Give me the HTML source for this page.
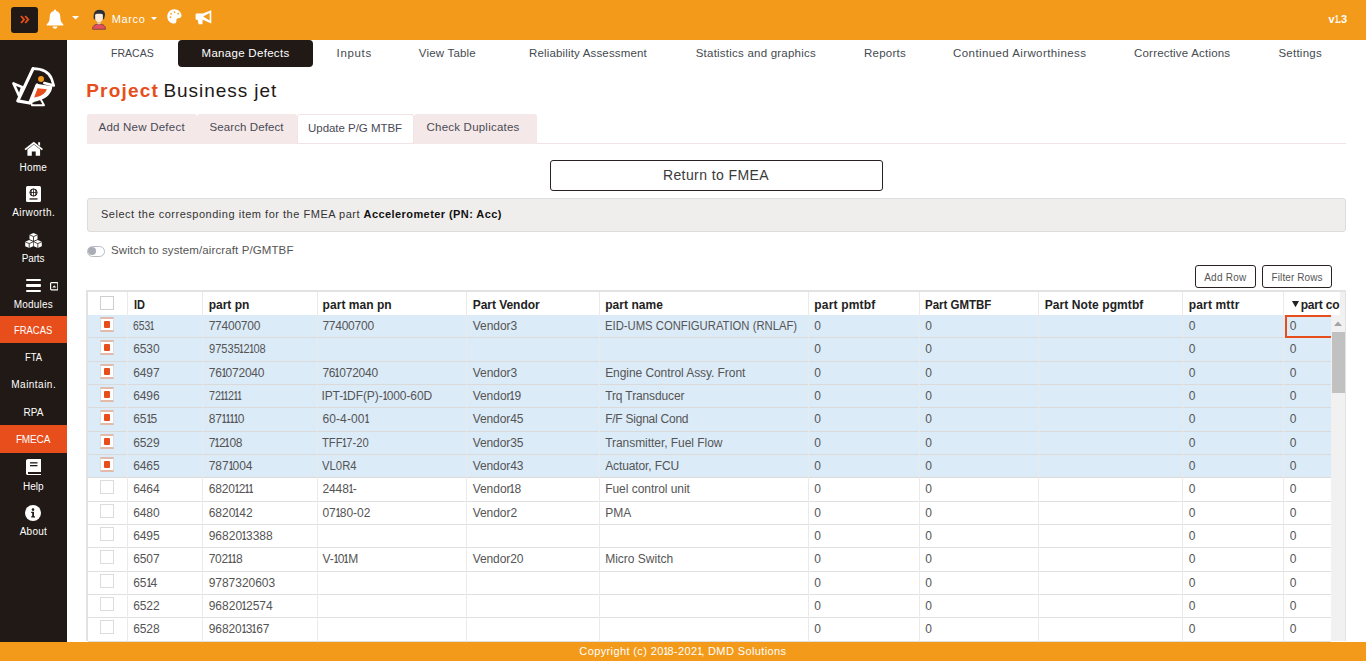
<!DOCTYPE html>
<html><head><meta charset="utf-8"><style>
html,body{margin:0;padding:0;width:1366px;height:661px;overflow:hidden;background:#fff;position:relative}
body{font-family:"Liberation Sans",sans-serif}
.t{position:absolute;white-space:nowrap}
.b{position:absolute}
</style></head><body>
<div class="b" style="left:0px;top:0px;width:1366px;height:40px;background:#F39A1B"></div>
<div class="b" style="left:11px;top:7px;width:27px;height:26px;background:#211915;border-radius:3px"></div>
<svg class="b" style="left:20px;top:14.5px" width="10" height="9" viewBox="0 0 10 9"><path d="M1 1 L4 4.5 L1 8 M5.2 1 L8.2 4.5 L5.2 8" stroke="#E84E1B" stroke-width="1.9" fill="none"/></svg>
<svg class="b" style="left:46px;top:9px" width="18" height="20" viewBox="0 0 18 20"><path d="M9 0.5 C10 0.5 10.2 1.4 10.2 2 C13 2.6 14.3 5 14.3 8 C14.3 12 15.3 13.6 17.3 15.3 L17.3 16.5 L0.7 16.5 L0.7 15.3 C2.7 13.6 3.7 12 3.7 8 C3.7 5 5 2.6 7.8 2 C7.8 1.4 8 0.5 9 0.5 Z M6.6 17.5 L11.4 17.5 C11.2 19 10.2 19.7 9 19.7 C7.8 19.7 6.8 19 6.6 17.5 Z" fill="#fff"/></svg>
<svg class="b" style="left:72px;top:16px" width="7" height="4" viewBox="0 0 7 4"><path d="M0 0 L7 0 L3.5 3.6 Z" fill="#fff"/></svg>
<svg class="b" style="left:88px;top:6px" width="24" height="26" viewBox="0 0 610 661"><path d="M118 592 C108 510 170 462 280 460 C390 462 452 510 442 592 Z" fill="#E94E5F" stroke="#2A2A33" stroke-width="14"/><rect x="235" y="380" width="88" height="85" fill="#E3C9A6"/><path d="M148 335 C125 200 170 95 290 95 C405 95 448 170 428 255 L405 335 Z" fill="#2B2F3A"/><path d="M182 232 C182 205 205 198 280 198 C355 198 378 205 378 232 L378 312 C378 372 338 405 280 405 C222 405 182 372 182 312 Z" fill="#FDEBD7"/></svg>
<div class="t" style="left:111.80px;top:13.66px;font-size:11px;line-height:11px;color:#fff;letter-spacing:0.625px;">Marco</div>
<svg class="b" style="left:151px;top:17px" width="6" height="4" viewBox="0 0 6 4"><path d="M0 0 L6 0 L3 3.2 Z" fill="#fff"/></svg>
<svg class="b" style="left:167px;top:9.3px" width="15" height="15" viewBox="0 0 15 15"><path d="M7.3 0.2 C11.5 0.2 14.5 3.2 14.5 6.6 C14.5 8.6 13.3 9.3 11.6 9.3 C10.3 9.3 9.4 9.8 9.4 11.2 C9.4 12.6 9.3 14.6 7.3 14.6 C3.2 14.6 0.3 11.3 0.3 7.4 C0.3 3.5 3.3 0.2 7.3 0.2 Z" fill="#fff"/><circle cx="4.1" cy="4.7" r="0.85" fill="#F39A1B"/><circle cx="7.5" cy="3.1" r="0.85" fill="#F39A1B"/><circle cx="11.2" cy="4.7" r="0.85" fill="#F39A1B"/><circle cx="3.5" cy="8.2" r="0.85" fill="#F39A1B"/></svg>
<svg class="b" style="left:194.5px;top:9.5px" width="17" height="15" viewBox="0 0 17 15"><path d="M1.3 3.5 L7.7 3.5 L16.3 0.2 L16.3 13.5 L7.7 9.7 L7.5 9.7 L7.5 14.2 L3.6 14.2 L2.6 9.7 L1.3 9.7 C0.8 9.7 0.6 9.3 0.6 8.8 L0.6 4.4 C0.6 3.9 0.8 3.5 1.3 3.5 Z" fill="#fff"/><path d="M8.2 6.6 L14.6 3.0 L14.6 10.4 Z" fill="#F39A1B"/></svg>
<div class="t" style="left:1328.60px;top:14.26px;font-size:11px;line-height:11px;color:#fff;font-weight:bold;letter-spacing:-0.200px;">v<span style="display:inline-block;width:3.63px;transform:scaleX(0.62);transform-origin:0 0;font-weight:bold">1</span>.3</div>
<div class="b" style="left:0px;top:40px;width:67px;height:621px;background:#211915"></div>
<svg class="b" style="left:8px;top:62px" width="52" height="48" viewBox="0 0 716 661"><path d="M392 300 L612 334 C600 440 525 505 445 522 L300 575 Z" fill="#fff"/><g fill="none" stroke="#fff" stroke-linejoin="round" stroke-linecap="round"><path d="M345 92 L135 535 L298 565 L400 318" stroke-width="44"/><path d="M345 92 C470 92 555 125 600 230 L630 324 L500 290" stroke-width="36"/><path d="M75 295 L196 346 L155 470 Z" stroke-width="36"/><path d="M310 540 L332 596 L496 596 L450 512" stroke-width="26"/></g><path d="M407 360 L535 376 C510 440 450 478 360 490 Z" fill="#E84E1B"/><path d="M360 548 L405 548 L382 585 Z" fill="#211915"/><circle cx="455" cy="235" r="41" fill="#F39A1B"/></svg>
<svg class="b" style="left:23.5px;top:140.5px" width="19.5" height="15" viewBox="0 0 20 15"><path d="M10 0.5 L19.5 8 L18.3 9.3 L10 2.8 L1.7 9.3 L0.5 8 Z M14.5 1 L16.5 1 L16.5 5 L14.5 3.5 Z M3.5 8.5 L10 3.5 L16.5 8.5 L16.5 15 L12 15 L12 10.5 L8 10.5 L8 15 L3.5 15 Z" fill="#fff"/></svg>
<div class="t" style="left:19.60px;top:162.91px;font-size:10px;line-height:10px;color:#fff;letter-spacing:0.200px;">Home</div>
<svg class="b" style="left:25.8px;top:186px" width="15" height="16" viewBox="0 0 15 16"><rect x="0" y="0" width="15" height="16" rx="1.5" fill="#fff"/><circle cx="7.5" cy="6.5" r="3.6" fill="none" stroke="#211915" stroke-width="1"/><path d="M3.9 6.5 L11.1 6.5 M7.5 2.9 L7.5 10.1 M5.8 3.2 C5 5.5 5 7.5 5.8 9.8 M9.2 3.2 C10 5.5 10 7.5 9.2 9.8" stroke="#211915" stroke-width="0.8" fill="none"/><rect x="3.5" y="12.3" width="8" height="1.3" fill="#211915"/></svg>
<div class="t" style="left:12.30px;top:207.72px;font-size:10px;line-height:10px;color:#fff;letter-spacing:0.363px;">Airworth.</div>
<svg class="b" style="left:25px;top:232.5px" width="17" height="15" viewBox="0 0 17 15"><path d="M8.5 0 L12.5 1.8 L12.5 6.2 L8.5 8 L4.5 6.2 L4.5 1.8 Z M4.2 7 L8.2 8.8 L8.2 13.2 L4.2 15 L0.2 13.2 L0.2 8.8 Z M12.8 7 L16.8 8.8 L16.8 13.2 L12.8 15 L8.8 13.2 L8.8 8.8 Z" fill="#fff"/><path d="M4.5 1.8 L8.5 3.6 L12.5 1.8 M8.5 3.6 L8.5 8 M0.2 8.8 L4.2 10.6 L8.2 8.8 M4.2 10.6 L4.2 15 M8.8 8.8 L12.8 10.6 L16.8 8.8 M12.8 10.6 L12.8 15" stroke="#211915" stroke-width="0.8" fill="none"/></svg>
<div class="t" style="left:21.80px;top:253.72px;font-size:10px;line-height:10px;color:#fff;letter-spacing:-0.175px;">Parts</div>
<div class="b" style="left:25.8px;top:278.5px;width:15px;height:2.6px;background:#fff;border-radius:1px"></div>
<div class="b" style="left:25.8px;top:284px;width:15px;height:2.6px;background:#fff;border-radius:1px"></div>
<div class="b" style="left:25.8px;top:289.5px;width:15px;height:2.6px;background:#fff;border-radius:1px"></div>
<svg class="b" style="left:49.8px;top:282px" width="8.5" height="8.5" viewBox="0 0 8.5 8.5"><rect x="0.6" y="0.6" width="7.3" height="7.3" rx="1" fill="none" stroke="#fff" stroke-width="1.2"/><path d="M2.3 5.6 L4.25 3.2 L6.2 5.6 Z" fill="#fff"/></svg>
<div class="t" style="left:13.80px;top:299.92px;font-size:10px;line-height:10px;color:#fff;letter-spacing:0.200px;">Modules</div>
<div class="b" style="left:0px;top:316px;width:67px;height:27px;background:#E84E1B"></div>
<div class="t" style="left:14.00px;top:325.81px;font-size:10px;line-height:10px;color:#fff;transform:scaleX(0.9415);transform-origin:0 0;">FRACAS</div>
<div class="t" style="left:24.50px;top:352.92px;font-size:10px;line-height:10px;color:#fff;transform:scaleX(0.9421);transform-origin:0 0;">FTA</div>
<div class="t" style="left:11.30px;top:379.62px;font-size:10px;line-height:10px;color:#fff;letter-spacing:0.475px;">Maintain.</div>
<div class="t" style="left:23.40px;top:407.52px;font-size:10px;line-height:10px;color:#fff;letter-spacing:0.100px;">RPA</div>
<div class="b" style="left:0px;top:424.6px;width:67px;height:28px;background:#E84E1B"></div>
<div class="t" style="left:15.90px;top:434.72px;font-size:10px;line-height:10px;color:#fff;letter-spacing:-0.125px;">FMECA</div>
<svg class="b" style="left:26px;top:458.8px" width="15" height="16.2" viewBox="0 0 15 16.2"><path d="M2 0 L15 0 L15 13 L14 13 L14 15 L15 15 L15 16.2 L2 16.2 C0.9 16.2 0 15.3 0 14.2 L0 2 C0 0.9 0.9 0 2 0 Z" fill="#fff"/><rect x="4" y="3.2" width="7.5" height="1.3" fill="#211915"/><rect x="4" y="6" width="7.5" height="1.3" fill="#211915"/><rect x="2" y="13" width="12" height="2" fill="#211915"/></svg>
<div class="t" style="left:23.00px;top:482.12px;font-size:10px;line-height:10px;color:#fff;letter-spacing:-0.033px;">Help</div>
<svg class="b" style="left:25px;top:505.2px" width="16" height="16" viewBox="0 0 16 16"><circle cx="8" cy="8" r="8" fill="#fff"/><circle cx="8" cy="4.6" r="1.3" fill="#211915"/><path d="M6.2 6.8 L9 6.8 L9 11.2 L10 11.2 L10 12.4 L6.2 12.4 L6.2 11.2 L7.2 11.2 L7.2 8 L6.2 8 Z" fill="#211915"/></svg>
<div class="t" style="left:19.70px;top:526.91px;font-size:10px;line-height:10px;color:#fff;letter-spacing:0.250px;">About</div>
<div class="b" style="left:178px;top:40px;width:135px;height:27px;background:#211915;border-radius:4px"></div>
<div class="t" style="left:111.00px;top:47.68px;font-size:11.5px;line-height:11.5px;color:#454a50;transform:scaleX(0.9149);transform-origin:0 0;">FRACAS</div>
<div class="t" style="left:336.60px;top:47.68px;font-size:11.5px;line-height:11.5px;color:#454a50;letter-spacing:0.660px;">Inputs</div>
<div class="t" style="left:418.80px;top:47.68px;font-size:11.5px;line-height:11.5px;color:#454a50;letter-spacing:0.189px;">View Table</div>
<div class="t" style="left:529.00px;top:47.68px;font-size:11.5px;line-height:11.5px;color:#454a50;letter-spacing:0.162px;">Reliability Assessment</div>
<div class="t" style="left:695.70px;top:47.68px;font-size:11.5px;line-height:11.5px;color:#454a50;letter-spacing:0.227px;">Statistics and graphics</div>
<div class="t" style="left:864.00px;top:47.68px;font-size:11.5px;line-height:11.5px;color:#454a50;letter-spacing:0.250px;">Reports</div>
<div class="t" style="left:953.10px;top:47.68px;font-size:11.5px;line-height:11.5px;color:#454a50;letter-spacing:0.405px;">Continued Airworthiness</div>
<div class="t" style="left:1134.00px;top:47.68px;font-size:11.5px;line-height:11.5px;color:#454a50;letter-spacing:0.200px;">Corrective Actions</div>
<div class="t" style="left:1278.40px;top:47.68px;font-size:11.5px;line-height:11.5px;color:#454a50;letter-spacing:0.257px;">Settings</div>
<div class="t" style="left:201.50px;top:47.68px;font-size:11.5px;line-height:11.5px;color:#fff;letter-spacing:0.300px;">Manage Defects</div>
<div class="t" style="left:86.20px;top:80.69px;font-size:19px;line-height:19px;color:#E84E1B;font-weight:bold;letter-spacing:1.200px;">Project</div>
<div class="t" style="left:163.50px;top:80.69px;font-size:19px;line-height:19px;color:#231815;letter-spacing:0.936px;">Business jet</div>
<div class="b" style="left:87px;top:143px;width:1259px;height:1px;background:#F2E4E4"></div>
<div class="b" style="left:87px;top:114px;width:110px;height:30px;background:#F4E8E8;border-radius:3px 3px 0 0"></div>
<div class="b" style="left:197px;top:114px;width:99.5px;height:30px;background:#F4E8E8;border-radius:3px 3px 0 0"></div>
<div class="b" style="left:296.8px;top:114px;width:117.4px;height:28.5px;background:#fff;border:1px solid #F2E4E4;border-bottom:none;box-sizing:border-box;border-radius:3px 3px 0 0"></div>
<div class="b" style="left:414px;top:114px;width:122.6px;height:29.5px;background:#F4E8E8;border-radius:3px 3px 0 0"></div>
<div class="t" style="left:98.50px;top:122.18px;font-size:11.5px;line-height:11.5px;color:#4a4a55;letter-spacing:0.231px;">Add New Defect</div>
<div class="t" style="left:209.60px;top:122.18px;font-size:11.5px;line-height:11.5px;color:#4a4a55;letter-spacing:0.092px;">Search Defect</div>
<div class="t" style="left:308.00px;top:122.78px;font-size:11.5px;line-height:11.5px;color:#4a4a55;letter-spacing:-0.036px;">Update P/G MTBF</div>
<div class="t" style="left:426.50px;top:121.78px;font-size:11.5px;line-height:11.5px;color:#4a4a55;letter-spacing:0.220px;">Check Duplicates</div>
<div class="b" style="left:550px;top:160px;width:333px;height:31px;border:1px solid #2a2220;border-radius:3px;box-sizing:border-box;background:#fff"></div>
<div class="t" style="left:662.90px;top:168.08px;font-size:14px;line-height:14px;color:#3a3a3a;letter-spacing:0.415px;">Return to FMEA</div>
<div class="b" style="left:87px;top:198px;width:1259px;height:33.5px;background:#EFEEED;border:1px solid #DCDCDC;border-radius:3px;box-sizing:border-box"></div>
<div class="t" style="left:101.00px;top:209.26px;font-size:11px;line-height:11px;color:#333;letter-spacing:0.517px;">Select the corresponding item for the FMEA part</div>
<div class="t" style="left:363.60px;top:209.26px;font-size:11px;line-height:11px;color:#111;font-weight:bold;letter-spacing:0.418px;">Accelerometer (PN: Acc)</div>
<div class="b" style="left:87px;top:246px;width:17.6px;height:10.5px;border:1px solid #b8bcc4;border-radius:6px;box-sizing:border-box;background:#fff"></div>
<div class="b" style="left:88.2px;top:247.2px;width:8.1px;height:8.1px;background:#A9ADB5;border-radius:50%"></div>
<div class="t" style="left:111.00px;top:245.18px;font-size:11.5px;line-height:11.5px;color:#555;letter-spacing:0.109px;">Switch to system/aircraft P/GMTBF</div>
<div class="b" style="left:1195px;top:265px;width:61px;height:23px;border:1px solid #2a2220;border-radius:3px;box-sizing:border-box"></div>
<div class="b" style="left:1262px;top:265px;width:70px;height:23px;border:1px solid #2a2220;border-radius:3px;box-sizing:border-box"></div>
<div class="t" style="left:1204.20px;top:272.81px;font-size:10px;line-height:10px;color:#555;letter-spacing:0.250px;">Add Row</div>
<div class="t" style="left:1271.50px;top:272.81px;font-size:10px;line-height:10px;color:#555;letter-spacing:0.110px;">Filter Rows</div>
<div class="b" style="left:86px;top:290px;width:1260px;height:351px;border:2px solid #E2E2E2;border-bottom:none;box-sizing:border-box"></div>
<div class="b" style="left:88px;top:315px;width:1242.5px;height:23px;background:#DCEBF8"></div>
<div class="b" style="left:88px;top:337px;width:1242.5px;height:1px;background:#DCDAD9"></div>
<div class="b" style="left:88px;top:338px;width:1242.5px;height:24px;background:#DCEBF8"></div>
<div class="b" style="left:88px;top:361px;width:1242.5px;height:1px;background:#DCDAD9"></div>
<div class="b" style="left:88px;top:362px;width:1242.5px;height:23px;background:#DCEBF8"></div>
<div class="b" style="left:88px;top:384px;width:1242.5px;height:1px;background:#DCDAD9"></div>
<div class="b" style="left:88px;top:385px;width:1242.5px;height:23px;background:#DCEBF8"></div>
<div class="b" style="left:88px;top:407px;width:1242.5px;height:1px;background:#DCDAD9"></div>
<div class="b" style="left:88px;top:408px;width:1242.5px;height:24px;background:#DCEBF8"></div>
<div class="b" style="left:88px;top:431px;width:1242.5px;height:1px;background:#DCDAD9"></div>
<div class="b" style="left:88px;top:432px;width:1242.5px;height:23px;background:#DCEBF8"></div>
<div class="b" style="left:88px;top:454px;width:1242.5px;height:1px;background:#DCDAD9"></div>
<div class="b" style="left:88px;top:455px;width:1242.5px;height:23px;background:#DCEBF8"></div>
<div class="b" style="left:88px;top:477px;width:1242.5px;height:1px;background:#DCDAD9"></div>
<div class="b" style="left:88px;top:501px;width:1242.5px;height:1px;background:#E0E0E0"></div>
<div class="b" style="left:88px;top:524px;width:1242.5px;height:1px;background:#E0E0E0"></div>
<div class="b" style="left:88px;top:547px;width:1242.5px;height:1px;background:#E0E0E0"></div>
<div class="b" style="left:88px;top:571px;width:1242.5px;height:1px;background:#E0E0E0"></div>
<div class="b" style="left:88px;top:594px;width:1242.5px;height:1px;background:#E0E0E0"></div>
<div class="b" style="left:88px;top:617px;width:1242.5px;height:1px;background:#E0E0E0"></div>
<div class="b" style="left:88px;top:641px;width:1242.5px;height:1px;background:#E0E0E0"></div>
<div class="b" style="left:1340px;top:291.5px;width:5px;height:23.5px;background:#F0F0F0"></div>
<div class="b" style="left:127px;top:291.5px;width:1px;height:350px;background:#EAEAEA"></div>
<div class="b" style="left:202px;top:291.5px;width:1px;height:350px;background:#EAEAEA"></div>
<div class="b" style="left:317px;top:291.5px;width:1px;height:350px;background:#EAEAEA"></div>
<div class="b" style="left:466px;top:291.5px;width:1px;height:350px;background:#EAEAEA"></div>
<div class="b" style="left:599px;top:291.5px;width:1px;height:350px;background:#EAEAEA"></div>
<div class="b" style="left:808px;top:291.5px;width:1px;height:350px;background:#EAEAEA"></div>
<div class="b" style="left:919px;top:291.5px;width:1px;height:350px;background:#EAEAEA"></div>
<div class="b" style="left:1038px;top:291.5px;width:1px;height:350px;background:#EAEAEA"></div>
<div class="b" style="left:1182px;top:291.5px;width:1px;height:350px;background:#EAEAEA"></div>
<div class="b" style="left:1283px;top:291.5px;width:1px;height:350px;background:#EAEAEA"></div>
<div class="b" style="left:100px;top:296px;width:14px;height:14px;border:1px solid #CFCFCF;box-sizing:border-box;background:#fff"></div>
<div class="t" style="left:133.50px;top:299.00px;font-size:12px;line-height:12px;color:#222;font-weight:bold;transform:scaleX(0.9167);transform-origin:0 0;">ID</div>
<div class="t" style="left:208.70px;top:299.00px;font-size:12px;line-height:12px;color:#222;font-weight:bold;">part pn</div>
<div class="t" style="left:322.60px;top:299.00px;font-size:12px;line-height:12px;color:#222;font-weight:bold;letter-spacing:0.040px;">part man pn</div>
<div class="t" style="left:472.70px;top:299.00px;font-size:12px;line-height:12px;color:#222;font-weight:bold;letter-spacing:-0.040px;">Part Vendor</div>
<div class="t" style="left:605.20px;top:299.00px;font-size:12px;line-height:12px;color:#222;font-weight:bold;letter-spacing:0.037px;">part name</div>
<div class="t" style="left:814.30px;top:299.00px;font-size:12px;line-height:12px;color:#222;font-weight:bold;letter-spacing:0.178px;">part pmtbf</div>
<div class="t" style="left:925.20px;top:299.00px;font-size:12px;line-height:12px;color:#222;font-weight:bold;transform:scaleX(0.9571);transform-origin:0 0;">Part GMTBF</div>
<div class="t" style="left:1044.70px;top:299.00px;font-size:12px;line-height:12px;color:#222;font-weight:bold;letter-spacing:0.087px;">Part Note pgmtbf</div>
<div class="t" style="left:1188.80px;top:299.00px;font-size:12px;line-height:12px;color:#222;font-weight:bold;letter-spacing:0.150px;">part mttr</div>
<svg class="b" style="left:1291.7px;top:301.3px" width="7" height="6.3" viewBox="0 0 7 6.3"><path d="M0 0 L7 0 L3.5 6.3 Z" fill="#222"/></svg>
<div class="t" style="left:1300.70px;top:299.00px;font-size:12px;line-height:12px;color:#222;font-weight:bold;letter-spacing:-0.183px;">part co</div>
<div class="t" style="left:133.20px;top:319.90px;font-size:12px;line-height:12px;color:#555555;transform:scaleX(0.8680);transform-origin:0 0;">653<span style="display:inline-block;width:3.96px;transform:scaleX(0.62);transform-origin:0 0;font-weight:bold">1</span></div>
<div class="t" style="left:208.70px;top:319.90px;font-size:12px;line-height:12px;color:#555555;letter-spacing:-0.243px;">77400700</div>
<div class="t" style="left:322.40px;top:319.90px;font-size:12px;line-height:12px;color:#555555;letter-spacing:-0.243px;">77400700</div>
<div class="t" style="left:472.70px;top:319.90px;font-size:12px;line-height:12px;color:#555555;letter-spacing:-0.033px;">Vendor3</div>
<div class="t" style="left:605.20px;top:319.90px;font-size:12px;line-height:12px;color:#555555;transform:scaleX(0.9397);transform-origin:0 0;">EID-UMS CONFIGURATION (RNLAF)</div>
<div class="t" style="left:814.30px;top:319.90px;font-size:12px;line-height:12px;color:#555555;">0</div>
<div class="t" style="left:925.20px;top:319.90px;font-size:12px;line-height:12px;color:#555555;">0</div>
<div class="t" style="left:1188.80px;top:319.90px;font-size:12px;line-height:12px;color:#555555;">0</div>
<div class="t" style="left:1289.80px;top:319.90px;font-size:12px;line-height:12px;color:#555555;">0</div>
<div class="b" style="left:100px;top:317.00px;width:14px;height:15px;background:#fff;border-left:1px solid #DDD;border-right:1px solid #DDD;border-top:2px solid #E3B9A9;border-bottom:2px solid #E3B9A9;box-sizing:border-box"></div>
<div class="b" style="left:103.7px;top:320.80px;width:6.8px;height:6.8px;background:#E84E1B;border-radius:1px"></div>
<div class="t" style="left:133.20px;top:342.90px;font-size:12px;line-height:12px;color:#555555;letter-spacing:-0.100px;">6530</div>
<div class="t" style="left:208.70px;top:342.90px;font-size:12px;line-height:12px;color:#555555;transform:scaleX(0.9258);transform-origin:0 0;">97535<span style="display:inline-block;width:3.96px;transform:scaleX(0.62);transform-origin:0 0;font-weight:bold">1</span>2<span style="display:inline-block;width:3.96px;transform:scaleX(0.62);transform-origin:0 0;font-weight:bold">1</span>08</div>
<div class="t" style="left:814.30px;top:342.90px;font-size:12px;line-height:12px;color:#555555;">0</div>
<div class="t" style="left:925.20px;top:342.90px;font-size:12px;line-height:12px;color:#555555;">0</div>
<div class="t" style="left:1188.80px;top:342.90px;font-size:12px;line-height:12px;color:#555555;">0</div>
<div class="t" style="left:1289.80px;top:342.90px;font-size:12px;line-height:12px;color:#555555;">0</div>
<div class="b" style="left:100px;top:340.00px;width:14px;height:15px;background:#fff;border-left:1px solid #DDD;border-right:1px solid #DDD;border-top:2px solid #E3B9A9;border-bottom:2px solid #E3B9A9;box-sizing:border-box"></div>
<div class="b" style="left:103.7px;top:343.80px;width:6.8px;height:6.8px;background:#E84E1B;border-radius:1px"></div>
<div class="t" style="left:133.20px;top:366.90px;font-size:12px;line-height:12px;color:#555555;letter-spacing:-0.100px;">6497</div>
<div class="t" style="left:208.70px;top:366.90px;font-size:12px;line-height:12px;color:#555555;letter-spacing:-0.225px;">76<span style="display:inline-block;width:3.96px;transform:scaleX(0.62);transform-origin:0 0;font-weight:bold">1</span>072040</div>
<div class="t" style="left:322.40px;top:366.90px;font-size:12px;line-height:12px;color:#555555;letter-spacing:-0.225px;">76<span style="display:inline-block;width:3.96px;transform:scaleX(0.62);transform-origin:0 0;font-weight:bold">1</span>072040</div>
<div class="t" style="left:472.70px;top:366.90px;font-size:12px;line-height:12px;color:#555555;letter-spacing:-0.033px;">Vendor3</div>
<div class="t" style="left:605.20px;top:366.90px;font-size:12px;line-height:12px;color:#555555;letter-spacing:-0.068px;">Engine Control Assy. Front</div>
<div class="t" style="left:814.30px;top:366.90px;font-size:12px;line-height:12px;color:#555555;">0</div>
<div class="t" style="left:925.20px;top:366.90px;font-size:12px;line-height:12px;color:#555555;">0</div>
<div class="t" style="left:1188.80px;top:366.90px;font-size:12px;line-height:12px;color:#555555;">0</div>
<div class="t" style="left:1289.80px;top:366.90px;font-size:12px;line-height:12px;color:#555555;">0</div>
<div class="b" style="left:100px;top:364.00px;width:14px;height:15px;background:#fff;border-left:1px solid #DDD;border-right:1px solid #DDD;border-top:2px solid #E3B9A9;border-bottom:2px solid #E3B9A9;box-sizing:border-box"></div>
<div class="b" style="left:103.7px;top:367.80px;width:6.8px;height:6.8px;background:#E84E1B;border-radius:1px"></div>
<div class="t" style="left:133.20px;top:389.90px;font-size:12px;line-height:12px;color:#555555;letter-spacing:-0.100px;">6496</div>
<div class="t" style="left:208.70px;top:389.90px;font-size:12px;line-height:12px;color:#555555;transform:scaleX(0.8973);transform-origin:0 0;">72<span style="display:inline-block;width:3.96px;transform:scaleX(0.62);transform-origin:0 0;font-weight:bold">1</span><span style="display:inline-block;width:3.96px;transform:scaleX(0.62);transform-origin:0 0;font-weight:bold">1</span>2<span style="display:inline-block;width:3.96px;transform:scaleX(0.62);transform-origin:0 0;font-weight:bold">1</span><span style="display:inline-block;width:3.96px;transform:scaleX(0.62);transform-origin:0 0;font-weight:bold">1</span></div>
<div class="t" style="left:321.40px;top:389.90px;font-size:12px;line-height:12px;color:#555555;letter-spacing:-0.067px;">IPT-<span style="display:inline-block;width:3.96px;transform:scaleX(0.62);transform-origin:0 0;font-weight:bold">1</span>DF(P)-<span style="display:inline-block;width:3.96px;transform:scaleX(0.62);transform-origin:0 0;font-weight:bold">1</span>000-60D</div>
<div class="t" style="left:472.70px;top:389.90px;font-size:12px;line-height:12px;color:#555555;letter-spacing:-0.043px;">Vendor<span style="display:inline-block;width:3.96px;transform:scaleX(0.62);transform-origin:0 0;font-weight:bold">1</span>9</div>
<div class="t" style="left:605.20px;top:389.90px;font-size:12px;line-height:12px;color:#555555;letter-spacing:-0.123px;">Trq Transducer</div>
<div class="t" style="left:814.30px;top:389.90px;font-size:12px;line-height:12px;color:#555555;">0</div>
<div class="t" style="left:925.20px;top:389.90px;font-size:12px;line-height:12px;color:#555555;">0</div>
<div class="t" style="left:1188.80px;top:389.90px;font-size:12px;line-height:12px;color:#555555;">0</div>
<div class="t" style="left:1289.80px;top:389.90px;font-size:12px;line-height:12px;color:#555555;">0</div>
<div class="b" style="left:100px;top:387.00px;width:14px;height:15px;background:#fff;border-left:1px solid #DDD;border-right:1px solid #DDD;border-top:2px solid #E3B9A9;border-bottom:2px solid #E3B9A9;box-sizing:border-box"></div>
<div class="b" style="left:103.7px;top:390.80px;width:6.8px;height:6.8px;background:#E84E1B;border-radius:1px"></div>
<div class="t" style="left:133.20px;top:412.90px;font-size:12px;line-height:12px;color:#555555;">65<span style="display:inline-block;width:3.96px;transform:scaleX(0.62);transform-origin:0 0;font-weight:bold">1</span>5</div>
<div class="t" style="left:208.70px;top:412.90px;font-size:12px;line-height:12px;color:#555555;letter-spacing:-0.083px;">87<span style="display:inline-block;width:3.96px;transform:scaleX(0.62);transform-origin:0 0;font-weight:bold">1</span><span style="display:inline-block;width:3.96px;transform:scaleX(0.62);transform-origin:0 0;font-weight:bold">1</span><span style="display:inline-block;width:3.96px;transform:scaleX(0.62);transform-origin:0 0;font-weight:bold">1</span><span style="display:inline-block;width:3.96px;transform:scaleX(0.62);transform-origin:0 0;font-weight:bold">1</span>0</div>
<div class="t" style="left:322.40px;top:412.90px;font-size:12px;line-height:12px;color:#555555;letter-spacing:0.129px;">60-4-00<span style="display:inline-block;width:3.96px;transform:scaleX(0.62);transform-origin:0 0;font-weight:bold">1</span></div>
<div class="t" style="left:472.70px;top:412.90px;font-size:12px;line-height:12px;color:#555555;letter-spacing:-0.086px;">Vendor45</div>
<div class="t" style="left:605.20px;top:412.90px;font-size:12px;line-height:12px;color:#555555;letter-spacing:-0.243px;">F/F Signal Cond</div>
<div class="t" style="left:814.30px;top:412.90px;font-size:12px;line-height:12px;color:#555555;">0</div>
<div class="t" style="left:925.20px;top:412.90px;font-size:12px;line-height:12px;color:#555555;">0</div>
<div class="t" style="left:1188.80px;top:412.90px;font-size:12px;line-height:12px;color:#555555;">0</div>
<div class="t" style="left:1289.80px;top:412.90px;font-size:12px;line-height:12px;color:#555555;">0</div>
<div class="b" style="left:100px;top:410.00px;width:14px;height:15px;background:#fff;border-left:1px solid #DDD;border-right:1px solid #DDD;border-top:2px solid #E3B9A9;border-bottom:2px solid #E3B9A9;box-sizing:border-box"></div>
<div class="b" style="left:103.7px;top:413.80px;width:6.8px;height:6.8px;background:#E84E1B;border-radius:1px"></div>
<div class="t" style="left:133.20px;top:436.90px;font-size:12px;line-height:12px;color:#555555;letter-spacing:-0.100px;">6529</div>
<div class="t" style="left:208.70px;top:436.90px;font-size:12px;line-height:12px;color:#555555;letter-spacing:-0.260px;">7<span style="display:inline-block;width:3.96px;transform:scaleX(0.62);transform-origin:0 0;font-weight:bold">1</span>2<span style="display:inline-block;width:3.96px;transform:scaleX(0.62);transform-origin:0 0;font-weight:bold">1</span>08</div>
<div class="t" style="left:322.40px;top:436.90px;font-size:12px;line-height:12px;color:#555555;transform:scaleX(0.9340);transform-origin:0 0;">TFF<span style="display:inline-block;width:3.96px;transform:scaleX(0.62);transform-origin:0 0;font-weight:bold">1</span>7-20</div>
<div class="t" style="left:472.70px;top:436.90px;font-size:12px;line-height:12px;color:#555555;letter-spacing:-0.086px;">Vendor35</div>
<div class="t" style="left:605.20px;top:436.90px;font-size:12px;line-height:12px;color:#555555;letter-spacing:-0.048px;">Transmitter, Fuel Flow</div>
<div class="t" style="left:814.30px;top:436.90px;font-size:12px;line-height:12px;color:#555555;">0</div>
<div class="t" style="left:925.20px;top:436.90px;font-size:12px;line-height:12px;color:#555555;">0</div>
<div class="t" style="left:1188.80px;top:436.90px;font-size:12px;line-height:12px;color:#555555;">0</div>
<div class="t" style="left:1289.80px;top:436.90px;font-size:12px;line-height:12px;color:#555555;">0</div>
<div class="b" style="left:100px;top:434.00px;width:14px;height:15px;background:#fff;border-left:1px solid #DDD;border-right:1px solid #DDD;border-top:2px solid #E3B9A9;border-bottom:2px solid #E3B9A9;box-sizing:border-box"></div>
<div class="b" style="left:103.7px;top:437.80px;width:6.8px;height:6.8px;background:#E84E1B;border-radius:1px"></div>
<div class="t" style="left:133.20px;top:459.90px;font-size:12px;line-height:12px;color:#555555;letter-spacing:-0.100px;">6465</div>
<div class="t" style="left:208.70px;top:459.90px;font-size:12px;line-height:12px;color:#555555;letter-spacing:-0.050px;">787<span style="display:inline-block;width:3.96px;transform:scaleX(0.62);transform-origin:0 0;font-weight:bold">1</span>004</div>
<div class="t" style="left:322.40px;top:459.90px;font-size:12px;line-height:12px;color:#555555;transform:scaleX(0.9432);transform-origin:0 0;">VL0R4</div>
<div class="t" style="left:472.70px;top:459.90px;font-size:12px;line-height:12px;color:#555555;letter-spacing:-0.086px;">Vendor43</div>
<div class="t" style="left:605.20px;top:459.90px;font-size:12px;line-height:12px;color:#555555;letter-spacing:-0.117px;">Actuator, FCU</div>
<div class="t" style="left:814.30px;top:459.90px;font-size:12px;line-height:12px;color:#555555;">0</div>
<div class="t" style="left:925.20px;top:459.90px;font-size:12px;line-height:12px;color:#555555;">0</div>
<div class="t" style="left:1188.80px;top:459.90px;font-size:12px;line-height:12px;color:#555555;">0</div>
<div class="t" style="left:1289.80px;top:459.90px;font-size:12px;line-height:12px;color:#555555;">0</div>
<div class="b" style="left:100px;top:457.00px;width:14px;height:15px;background:#fff;border-left:1px solid #DDD;border-right:1px solid #DDD;border-top:2px solid #E3B9A9;border-bottom:2px solid #E3B9A9;box-sizing:border-box"></div>
<div class="b" style="left:103.7px;top:460.80px;width:6.8px;height:6.8px;background:#E84E1B;border-radius:1px"></div>
<div class="t" style="left:133.20px;top:482.90px;font-size:12px;line-height:12px;color:#555555;letter-spacing:-0.100px;">6464</div>
<div class="t" style="left:208.70px;top:482.90px;font-size:12px;line-height:12px;color:#555555;letter-spacing:-0.129px;">6820<span style="display:inline-block;width:3.96px;transform:scaleX(0.62);transform-origin:0 0;font-weight:bold">1</span>2<span style="display:inline-block;width:3.96px;transform:scaleX(0.62);transform-origin:0 0;font-weight:bold">1</span><span style="display:inline-block;width:3.96px;transform:scaleX(0.62);transform-origin:0 0;font-weight:bold">1</span></div>
<div class="t" style="left:322.40px;top:482.90px;font-size:12px;line-height:12px;color:#555555;letter-spacing:-0.070px;">2448<span style="display:inline-block;width:3.96px;transform:scaleX(0.62);transform-origin:0 0;font-weight:bold">1</span>-</div>
<div class="t" style="left:472.70px;top:482.90px;font-size:12px;line-height:12px;color:#555555;letter-spacing:-0.043px;">Vendor<span style="display:inline-block;width:3.96px;transform:scaleX(0.62);transform-origin:0 0;font-weight:bold">1</span>8</div>
<div class="t" style="left:605.20px;top:482.90px;font-size:12px;line-height:12px;color:#555555;letter-spacing:-0.038px;">Fuel control unit</div>
<div class="t" style="left:814.30px;top:482.90px;font-size:12px;line-height:12px;color:#555555;">0</div>
<div class="t" style="left:925.20px;top:482.90px;font-size:12px;line-height:12px;color:#555555;">0</div>
<div class="t" style="left:1188.80px;top:482.90px;font-size:12px;line-height:12px;color:#555555;">0</div>
<div class="t" style="left:1289.80px;top:482.90px;font-size:12px;line-height:12px;color:#555555;">0</div>
<div class="b" style="left:100px;top:480.20px;width:14px;height:14px;background:#fff;border:1px solid #DCDCDC;box-sizing:border-box"></div>
<div class="t" style="left:133.20px;top:506.90px;font-size:12px;line-height:12px;color:#555555;letter-spacing:-0.100px;">6480</div>
<div class="t" style="left:208.70px;top:506.90px;font-size:12px;line-height:12px;color:#555555;">6820<span style="display:inline-block;width:3.96px;transform:scaleX(0.62);transform-origin:0 0;font-weight:bold">1</span>42</div>
<div class="t" style="left:322.40px;top:506.90px;font-size:12px;line-height:12px;color:#555555;">07<span style="display:inline-block;width:3.96px;transform:scaleX(0.62);transform-origin:0 0;font-weight:bold">1</span>80-02</div>
<div class="t" style="left:472.70px;top:506.90px;font-size:12px;line-height:12px;color:#555555;letter-spacing:-0.050px;">Vendor2</div>
<div class="t" style="left:605.20px;top:506.90px;font-size:12px;line-height:12px;color:#555555;">PMA</div>
<div class="t" style="left:814.30px;top:506.90px;font-size:12px;line-height:12px;color:#555555;">0</div>
<div class="t" style="left:925.20px;top:506.90px;font-size:12px;line-height:12px;color:#555555;">0</div>
<div class="t" style="left:1188.80px;top:506.90px;font-size:12px;line-height:12px;color:#555555;">0</div>
<div class="t" style="left:1289.80px;top:506.90px;font-size:12px;line-height:12px;color:#555555;">0</div>
<div class="b" style="left:100px;top:504.20px;width:14px;height:14px;background:#fff;border:1px solid #DCDCDC;box-sizing:border-box"></div>
<div class="t" style="left:133.20px;top:529.90px;font-size:12px;line-height:12px;color:#555555;letter-spacing:-0.100px;">6495</div>
<div class="t" style="left:208.70px;top:529.90px;font-size:12px;line-height:12px;color:#555555;">96820<span style="display:inline-block;width:3.96px;transform:scaleX(0.62);transform-origin:0 0;font-weight:bold">1</span>3388</div>
<div class="t" style="left:814.30px;top:529.90px;font-size:12px;line-height:12px;color:#555555;">0</div>
<div class="t" style="left:925.20px;top:529.90px;font-size:12px;line-height:12px;color:#555555;">0</div>
<div class="t" style="left:1188.80px;top:529.90px;font-size:12px;line-height:12px;color:#555555;">0</div>
<div class="t" style="left:1289.80px;top:529.90px;font-size:12px;line-height:12px;color:#555555;">0</div>
<div class="b" style="left:100px;top:527.20px;width:14px;height:14px;background:#fff;border:1px solid #DCDCDC;box-sizing:border-box"></div>
<div class="t" style="left:133.20px;top:552.90px;font-size:12px;line-height:12px;color:#555555;letter-spacing:-0.100px;">6507</div>
<div class="t" style="left:208.70px;top:552.90px;font-size:12px;line-height:12px;color:#555555;letter-spacing:-0.250px;">702<span style="display:inline-block;width:3.96px;transform:scaleX(0.62);transform-origin:0 0;font-weight:bold">1</span><span style="display:inline-block;width:3.96px;transform:scaleX(0.62);transform-origin:0 0;font-weight:bold">1</span>8</div>
<div class="t" style="left:322.40px;top:552.90px;font-size:12px;line-height:12px;color:#555555;letter-spacing:-0.010px;">V-<span style="display:inline-block;width:3.96px;transform:scaleX(0.62);transform-origin:0 0;font-weight:bold">1</span>0<span style="display:inline-block;width:3.96px;transform:scaleX(0.62);transform-origin:0 0;font-weight:bold">1</span>M</div>
<div class="t" style="left:472.70px;top:552.90px;font-size:12px;line-height:12px;color:#555555;letter-spacing:-0.086px;">Vendor20</div>
<div class="t" style="left:605.20px;top:552.90px;font-size:12px;line-height:12px;color:#555555;">Micro Switch</div>
<div class="t" style="left:814.30px;top:552.90px;font-size:12px;line-height:12px;color:#555555;">0</div>
<div class="t" style="left:925.20px;top:552.90px;font-size:12px;line-height:12px;color:#555555;">0</div>
<div class="t" style="left:1188.80px;top:552.90px;font-size:12px;line-height:12px;color:#555555;">0</div>
<div class="t" style="left:1289.80px;top:552.90px;font-size:12px;line-height:12px;color:#555555;">0</div>
<div class="b" style="left:100px;top:550.20px;width:14px;height:14px;background:#fff;border:1px solid #DCDCDC;box-sizing:border-box"></div>
<div class="t" style="left:133.20px;top:576.90px;font-size:12px;line-height:12px;color:#555555;">65<span style="display:inline-block;width:3.96px;transform:scaleX(0.62);transform-origin:0 0;font-weight:bold">1</span>4</div>
<div class="t" style="left:208.70px;top:576.90px;font-size:12px;line-height:12px;color:#555555;letter-spacing:-0.028px;">9787320603</div>
<div class="t" style="left:814.30px;top:576.90px;font-size:12px;line-height:12px;color:#555555;">0</div>
<div class="t" style="left:925.20px;top:576.90px;font-size:12px;line-height:12px;color:#555555;">0</div>
<div class="t" style="left:1188.80px;top:576.90px;font-size:12px;line-height:12px;color:#555555;">0</div>
<div class="t" style="left:1289.80px;top:576.90px;font-size:12px;line-height:12px;color:#555555;">0</div>
<div class="b" style="left:100px;top:574.20px;width:14px;height:14px;background:#fff;border:1px solid #DCDCDC;box-sizing:border-box"></div>
<div class="t" style="left:133.20px;top:599.90px;font-size:12px;line-height:12px;color:#555555;letter-spacing:-0.100px;">6522</div>
<div class="t" style="left:208.70px;top:599.90px;font-size:12px;line-height:12px;color:#555555;">96820<span style="display:inline-block;width:3.96px;transform:scaleX(0.62);transform-origin:0 0;font-weight:bold">1</span>2574</div>
<div class="t" style="left:814.30px;top:599.90px;font-size:12px;line-height:12px;color:#555555;">0</div>
<div class="t" style="left:925.20px;top:599.90px;font-size:12px;line-height:12px;color:#555555;">0</div>
<div class="t" style="left:1188.80px;top:599.90px;font-size:12px;line-height:12px;color:#555555;">0</div>
<div class="t" style="left:1289.80px;top:599.90px;font-size:12px;line-height:12px;color:#555555;">0</div>
<div class="b" style="left:100px;top:597.20px;width:14px;height:14px;background:#fff;border:1px solid #DCDCDC;box-sizing:border-box"></div>
<div class="t" style="left:133.20px;top:622.90px;font-size:12px;line-height:12px;color:#555555;letter-spacing:-0.100px;">6528</div>
<div class="t" style="left:208.70px;top:622.90px;font-size:12px;line-height:12px;color:#555555;letter-spacing:-0.072px;">96820<span style="display:inline-block;width:3.96px;transform:scaleX(0.62);transform-origin:0 0;font-weight:bold">1</span>3<span style="display:inline-block;width:3.96px;transform:scaleX(0.62);transform-origin:0 0;font-weight:bold">1</span>67</div>
<div class="t" style="left:814.30px;top:622.90px;font-size:12px;line-height:12px;color:#555555;">0</div>
<div class="t" style="left:925.20px;top:622.90px;font-size:12px;line-height:12px;color:#555555;">0</div>
<div class="t" style="left:1188.80px;top:622.90px;font-size:12px;line-height:12px;color:#555555;">0</div>
<div class="t" style="left:1289.80px;top:622.90px;font-size:12px;line-height:12px;color:#555555;">0</div>
<div class="b" style="left:100px;top:620.20px;width:14px;height:14px;background:#fff;border:1px solid #DCDCDC;box-sizing:border-box"></div>
<div class="b" style="left:1284.5px;top:315px;width:50px;height:23px;border:2.7px solid #E84E1B;border-right:none;box-sizing:border-box"></div>
<div class="b" style="left:1330.5px;top:315px;width:14.8px;height:326px;background:#F1F1F1"></div>
<svg class="b" style="left:1334px;top:321px" width="8" height="5" viewBox="0 0 8 5"><path d="M0 5 L4 0.5 L8 5 Z" fill="#A3A3A3"/></svg>
<div class="b" style="left:1332px;top:331.7px;width:13px;height:61.3px;background:#C1C1C1"></div>
<div class="b" style="left:0px;top:641.5px;width:1366px;height:20px;background:#F39A1B"></div>
<div class="t" style="left:579.30px;top:645.56px;font-size:11px;line-height:11px;color:#FFFFFF;letter-spacing:0.389px;">Copyright (c) 20<span style="display:inline-block;width:3.63px;transform:scaleX(0.62);transform-origin:0 0;font-weight:bold">1</span>8-202<span style="display:inline-block;width:3.63px;transform:scaleX(0.62);transform-origin:0 0;font-weight:bold">1</span>, DMD Solutions</div>
</body></html>
